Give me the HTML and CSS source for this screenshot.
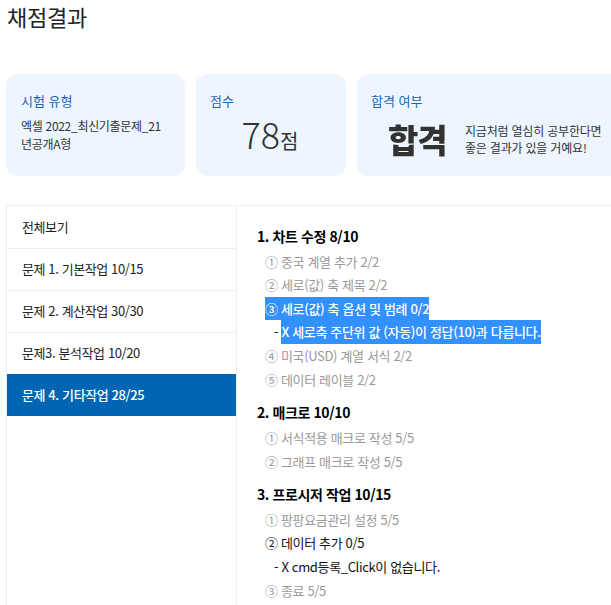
FILE: index.html
```html
<!DOCTYPE html>
<html lang="ko">
<head>
<meta charset="utf-8">
<title>채점결과</title>
<link rel="stylesheet" href="styles.css">
</head>
<body>
<svg class="defs" width="0" height="0" aria-hidden="true">
  <filter id="brush" x="-5%" y="-5%" width="110%" height="110%">
    <feTurbulence type="fractalNoise" baseFrequency="0.3" numOctaves="2" seed="4" result="n"/>
    <feDisplacementMap in="SourceGraphic" in2="n" scale="1.6"/>
  </filter>
</svg>
<div class="page">
  <h1 class="title">채점결과</h1>
  <div class="cards">
    <section class="card card-type">
      <h2 class="card-label">시험 유형</h2>
      <p class="card-text">엑셀 2022_최신기출문제_21년공개A형</p>
    </section>
    <section class="card card-score">
      <h2 class="card-label">점수</h2>
      <p class="score"><span class="score-num">78</span>점</p>
    </section>
    <section class="card card-pass">
      <h2 class="card-label">합격 여부</h2>
      <div class="pass-row">
        <span class="stamp">합격</span>
        <p class="pass-text">지금처럼 열심히 공부한다면<br>좋은 결과가 있을 거예요!</p>
      </div>
    </section>
  </div>
  <div class="panel">
    <nav class="side">
      <a class="side-item">전체보기</a>
      <a class="side-item">문제 1. 기본작업 10/15</a>
      <a class="side-item">문제 2. 계산작업 30/30</a>
      <a class="side-item">문제3. 분석작업 10/20</a>
      <a class="side-item active">문제 4. 기타작업 28/25</a>
    </nav>
    <div class="detail">
      <section class="group">
        <h3 class="group-title">1. 차트 수정 8/10</h3>
        <p class="item ok">① 중국 계열 추가 2/2</p>
        <p class="item ok">② 세로(값) 축 제목 2/2</p>
        <p class="item"><span class="mark">③ 세로(값) 축 옵션 및 범례 0/2</span></p>
        <p class="item sub">- <span class="mark">X 세로축 주단위 값 (자동)이 정답(10)과 다릅니다.</span></p>
        <p class="item ok">④ 미국(USD) 계열 서식 2/2</p>
        <p class="item ok">⑤ 데이터 레이블 2/2</p>
      </section>
      <section class="group">
        <h3 class="group-title">2. 매크로 10/10</h3>
        <p class="item ok">① 서식적용 매크로 작성 5/5</p>
        <p class="item ok">② 그래프 매크로 작성 5/5</p>
      </section>
      <section class="group">
        <h3 class="group-title">3. 프로시저 작업 10/15</h3>
        <p class="item ok">① 팡팡요금관리 설정 5/5</p>
        <p class="item">② 데이터 추가 0/5</p>
        <p class="item sub">- X cmd등록_Click이 없습니다.</p>
        <p class="item ok">③ 종료 5/5</p>
      </section>
    </div>
  </div>
</div>
</body>
</html>
```
FILE: styles.css
```css
html, body {
  margin: 0;
  padding: 0;
  height: 605px;
  overflow: hidden;
  background: #fff;
}
body {
  font-family: "Noto Sans CJK KR", "Noto Sans", sans-serif;
  color: #222;
  font-size: 13px;
}
h1, h2, h3, p { margin: 0; font-weight: 400; }
.defs { display: block; height: 0; }
.page {
  width: 900px;
  padding-left: 6px;
}
.title {
  font-size: 22px;
  line-height: 32px;
  height: 74px;
  letter-spacing: -0.2px;
  color: #222;
  padding-left: 1px;
}
.cards {
  display: flex;
  gap: 11px;
  height: 102px;
}
.card {
  background: #edf5ff;
  border-radius: 12px;
  padding: 17px 15px 0;
  box-sizing: border-box;
}
.card-type { width: 179px; }
.card-score { width: 150px; padding-left: 14px; }
.card-pass { width: 400px; padding-left: 14px; }
.card-label {
  font-size: 13px;
  line-height: 20px;
  color: #1a65b5;
}
.card-text {
  margin-top: 6px;
  font-size: 12px;
  line-height: 18px;
  letter-spacing: -0.3px;
  width: 148px;
  word-break: break-all;
  color: #333;
}
.score {
  text-align: center;
  font-size: 20px;
  line-height: 40px;
  margin-top: 2px;
  color: #333;
  padding-right: 1px;
}
.score-num { font-size: 36px; font-weight: 300; }
.pass-row {
  display: flex;
  align-items: center;
  margin-top: 6px;
}
.stamp {
  font-size: 33px;
  font-weight: 900;
  line-height: 44px;
  color: #333;
  width: 94px;
  padding-left: 17px;
  box-sizing: border-box;
  letter-spacing: -1px;
  white-space: nowrap;
  filter: url(#brush);
}
.pass-text {
  font-size: 12px;
  line-height: 17.5px;
  letter-spacing: -0.2px;
  color: #333;
}
.panel {
  display: flex;
  margin-top: 29px;
  border: 1px solid #eee;
  height: 420px;
}
.side {
  width: 229px;
  border-right: 1px solid #eee;
  flex: none;
}
.side-item {
  display: flex;
  align-items: center;
  height: 42px;
  padding-left: 15px;
  padding-bottom: 2px;
  box-sizing: border-box;
  border-top: 1px solid #eee;
  color: #222;
  font-size: 13px;
  letter-spacing: -0.4px;
}
.side-item:first-child { border-top: 0; }
.side-item.active {
  background: #0066b3;
  color: #fff;
  border-top: 0;
  font-weight: 500;
}
.detail {
  padding: 17px 0 0 20px;
}
.group { margin-bottom: 8px; }
.group-title {
  font-size: 14px;
  font-weight: 700;
  line-height: 26px;
  margin-bottom: 0.7px;
  color: #000;
  letter-spacing: -0.4px;
}
.item {
  font-size: 13px;
  line-height: 23.6px;
  padding-left: 8px;
  color: #111;
  letter-spacing: -0.35px;
}
.item.ok { color: #999; }
.item.sub { padding-left: 17px; }
.mark {
  background: #3390ff;
  color: #fff;
  display: inline-block;
  font-weight: 500;
}
```
